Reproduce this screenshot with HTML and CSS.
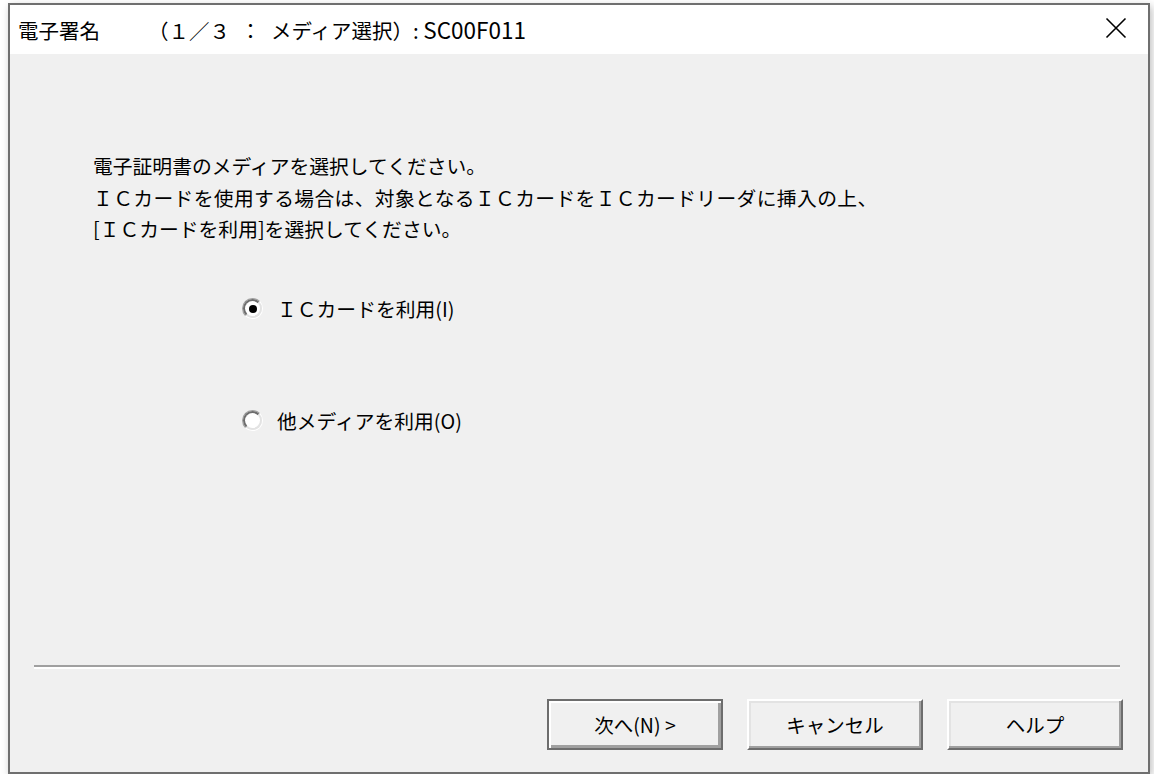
FILE: index.html
```html
<!DOCTYPE html>
<html lang="ja">
<head>
<meta charset="utf-8">
<link rel="stylesheet" href="styles.css">
</head>
<body>
<div class="window">
  <div class="titlebar">
    <span class="title">電子署名<span class="sub">（１／３&#8194;：&#8194;メディア選択）: <span class="code">SC00F011</span></span></span>
    <svg class="close" width="22" height="22" viewBox="0 0 22 22"><path d="M1.5 1.5 L20.5 20.5 M20.5 1.5 L1.5 20.5" stroke="#000" stroke-width="1.6" fill="none"/></svg>
  </div>
  <div class="content">
    <div class="message">
      <p>電子証明書のメディアを選択してください。</p>
      <p class="wide">ＩＣカードを使用する場合は、対象となるＩＣカードをＩＣカードリーダに挿入の上、</p>
      <p>[ＩＣカードを利用]を選択してください。</p>
    </div>
    <div class="options">
      <label class="option"><span class="radio checked"><span class="ring"></span></span><span class="label">ＩＣカードを利用(I)</span></label>
      <label class="option"><span class="radio"><span class="ring"></span></span><span class="label">他メディアを利用(O)</span></label>
    </div>
    <div class="separator"></div>
    <div class="buttons">
      <div class="btn default">次へ(N) &gt;</div>
      <div class="btn">キャンセル</div>
      <div class="btn">ヘルプ</div>
    </div>
  </div>
</div>
</body>
</html>
```

FILE: styles.css
```css
html, body {
  margin: 0;
  padding: 0;
  background: #ffffff;
}
body {
  padding: 3px 0 0 8px;
  font-family: "Noto Sans CJK JP", "Noto Sans", sans-serif;
  color: #000;
}
.window {
  box-sizing: border-box;
  width: 1142px;
  height: 771px;
  border: 2px solid #6f6f6f;
  background: #f0f0f0;
  box-shadow: 2px 3px 8px rgba(0,0,0,0.25);
  display: flex;
  flex-direction: column;
}
.titlebar {
  height: 49px;
  background: #ffffff;
  display: flex;
  align-items: center;
  justify-content: space-between;
  padding: 0 21px 0 8px;
  flex: none;
}
.title {
  font-size: 20.5px;
  line-height: 26px;
  white-space: pre;
}
.title .sub {
  margin-left: 48px;
}
.title .code {
  font-size: 22.5px;
}
.close {
  display: block;
  margin-top: -3px;
}
.content {
  flex: 1;
  display: flex;
  flex-direction: column;
  padding: 96px 25px 22px 24px;
}
.message {
  padding-left: 59px;
  font-size: 19.8px;
  line-height: 31.5px;
}
.message p {
  margin: 0;
  white-space: nowrap;
}
.message p.wide {
  letter-spacing: 0.35px;
}
.options {
  padding-left: 208px;
  margin-top: 52px;
  display: flex;
  flex-direction: column;
  gap: 88px;
}
.option {
  display: flex;
  align-items: center;
  height: 24px;
  gap: 14px;
}
.label {
  font-size: 19.8px;
  line-height: 24px;
}
.radio {
  box-sizing: border-box;
  width: 21px;
  height: 21px;
  border-radius: 50%;
  border: 1px solid;
  border-color: #a0a0a0 #ffffff #ffffff #a0a0a0;
  display: flex;
  flex: none;
}
.ring {
  box-sizing: border-box;
  flex: 1;
  border-radius: 50%;
  border: 2px solid;
  border-color: #6d6d6d #e3e3e3 #e3e3e3 #6d6d6d;
  background: #ffffff;
  display: flex;
  align-items: center;
  justify-content: center;
}
.radio.checked .ring::after {
  content: "";
  width: 8px;
  height: 8px;
  border-radius: 50%;
  background: #000;
}
.separator {
  margin-top: auto;
  margin-right: 3px;
  height: 2px;
  background: #a0a0a0;
  border-bottom: 2px solid #ffffff;
}
.buttons {
  display: flex;
  justify-content: flex-end;
  gap: 24px;
  margin-top: 30px;
}
.btn {
  box-sizing: border-box;
  width: 176px;
  height: 51px;
  display: flex;
  align-items: center;
  justify-content: center;
  font-size: 19.5px;
  border: 2px solid;
  border-color: #ffffff #6d6d6d #6d6d6d #ffffff;
  box-shadow: inset -2px -2px #a0a0a0, inset 2px 2px #e3e3e3;
  background: #f0f0f0;
}
.btn.default {
  border-color: #6d6d6d;
  box-shadow: inset 2px 2px #ffffff, inset -3px -3px #a0a0a0;
}
```
